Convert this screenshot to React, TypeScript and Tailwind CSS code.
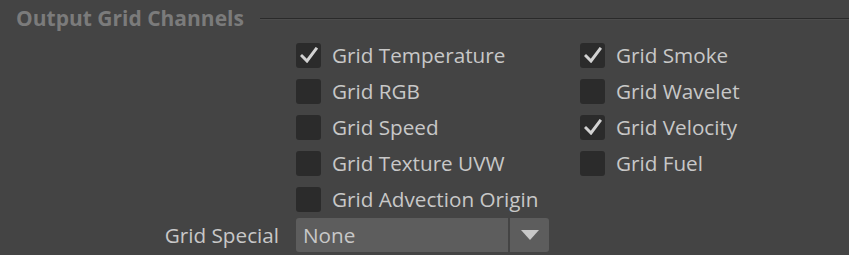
import React from "react";

const Check = ({ checked }: { checked?: boolean }) => (
  <div className="w-[25px] h-[25px] rounded-[3px] bg-[#2b2b2b] flex items-center justify-center shrink-0">
    {checked && (
      <svg width="18" height="16" viewBox="0 0 18 16">
        <path d="M2 9 L7 14 L16 2" stroke="#d2d2d2" strokeWidth="3" fill="none" strokeLinecap="square" />
      </svg>
    )}
  </div>
);

const Row = ({ label, checked }: { label: string; checked?: boolean }) => (
  <div className="flex items-center gap-[11px] h-[36px]">
    <Check checked={checked} />
    <span>{label}</span>
  </div>
);

export default function App() {
  const left = [
    { label: "Grid Temperature", checked: true },
    { label: "Grid RGB" },
    { label: "Grid Speed" },
    { label: "Grid Texture UVW" },
    { label: "Grid Advection Origin" },
  ];
  const right = [
    { label: "Grid Smoke", checked: true },
    { label: "Grid Wavelet" },
    { label: "Grid Velocity", checked: true },
    { label: "Grid Fuel" },
  ];

  return (
    <div
      className="w-[849px] h-[255px] bg-[#444444] text-[#c8c8c8] text-[20.7px] leading-none overflow-hidden"
      style={{ fontFamily: '"Open Sans", "Noto Sans", sans-serif' }}
    >
      <div className="flex items-center h-[37px] pl-[16px]">
        <span className="font-bold text-[21px] text-[#7b7b7b]">Output Grid Channels</span>
        <div className="flex-1 ml-[16px] h-[2px] bg-[#2a2a2a] border-b border-[#4c4c4c]" />
      </div>
      <div className="flex pl-[296px]">
        <div className="w-[284px] flex flex-col">
          {left.map((r) => (
            <Row key={r.label} {...r} />
          ))}
        </div>
        <div className="flex flex-col">
          {right.map((r) => (
            <Row key={r.label} {...r} />
          ))}
        </div>
      </div>
      <div className="flex items-center mt-[1px]">
        <span className="w-[279px] text-right">Grid Special</span>
        <div className="ml-[17px] flex h-[34px] w-[253px]">
          <div className="flex-1 bg-[#5d5d5d] rounded-l-[3px] flex items-center pl-[7px]">None</div>
          <div className="w-[39px] ml-[2px] bg-[#5d5d5d] rounded-r-[3px] flex items-center justify-center">
            <svg width="18" height="10" viewBox="0 0 18 10">
              <path d="M0 0 H18 L9 10 Z" fill="#c8c8c8" />
            </svg>
          </div>
        </div>
      </div>
    </div>
  );
}
